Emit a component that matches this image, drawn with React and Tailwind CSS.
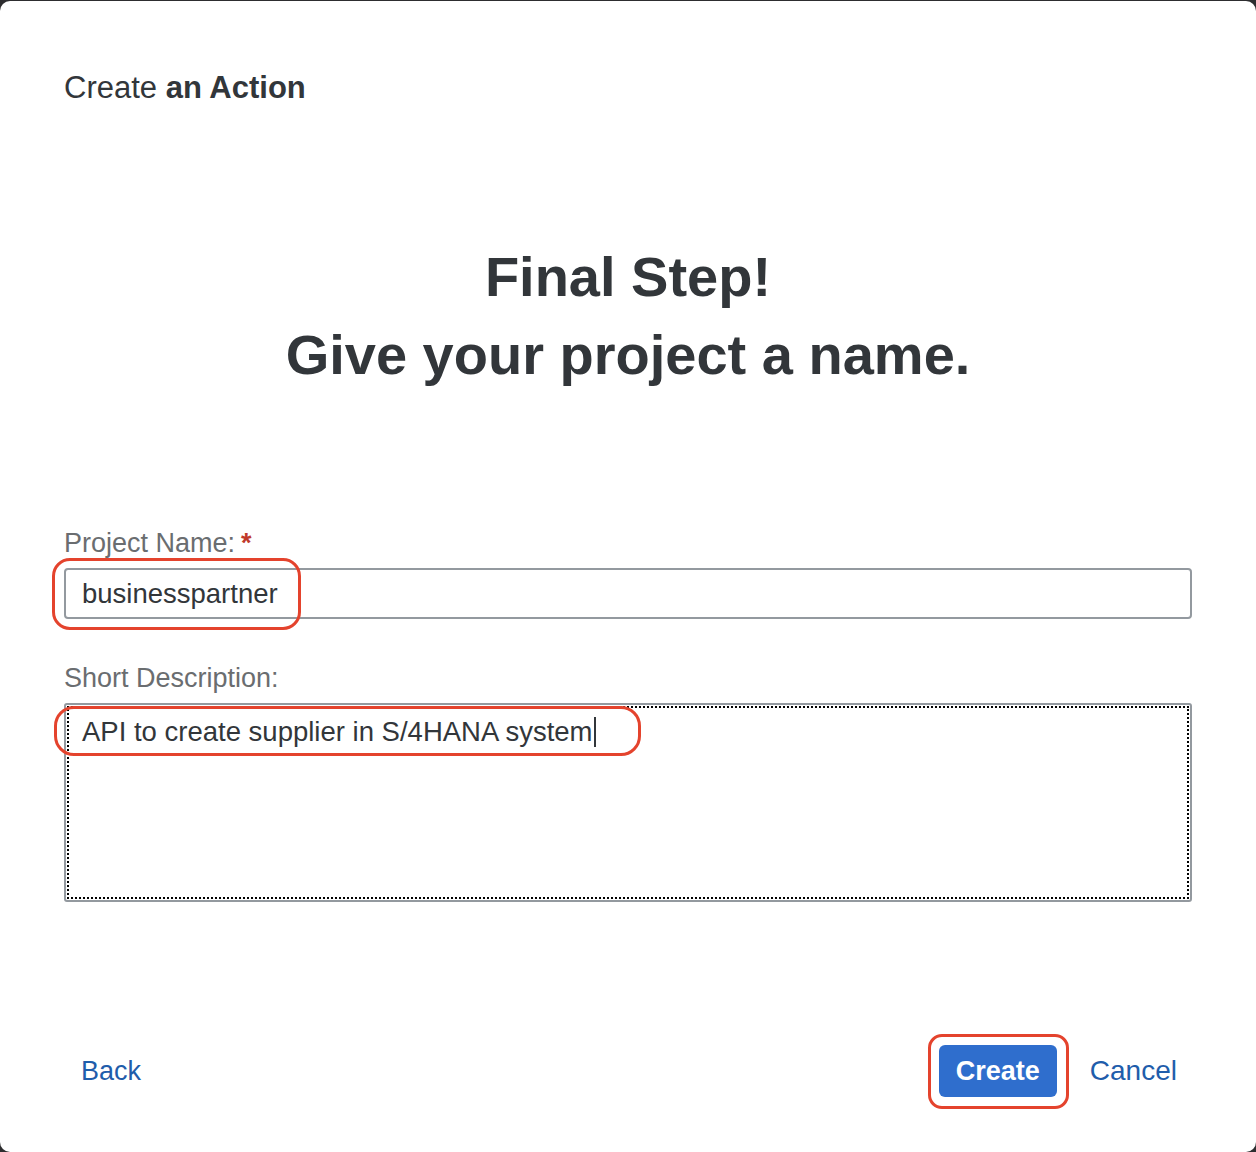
export default function App() {
  const font = { fontFamily: '"Liberation Sans", Arial, sans-serif' };
  return (
    <div className="min-h-screen bg-[#2d2d2f] pt-[1px]" style={font}>
      <div className="relative mx-auto flex h-[1151px] w-[1256px] flex-col rounded-[10px] bg-white px-[64px] text-[#32363a]">
        {/* header */}
        <div className="pt-[69px] text-[31px] leading-[36px]">
          Create <span className="font-bold">an Action</span>
        </div>

        {/* heading */}
        <h1 className="mt-[132px] text-center text-[56px] font-bold leading-[78px]">
          Final Step!
          <br />
          Give your project a name.
        </h1>

        {/* form */}
        <label className="mt-[133px] flex text-[27px] leading-[32px] text-[#6a6d70]">
          Project Name:
          <span className="ml-[6px] font-bold text-[#c0392b]">*</span>
        </label>
        <div className="mt-[9px] flex h-[51px] items-center rounded-[4px] border-2 border-[#93999f] pl-[16px] text-[27.5px] leading-[32px]">
          businesspartner
        </div>

        <label className="mt-[43px] text-[27px] leading-[32px] text-[#6a6d70]">Short Description:</label>
        <div className="mt-[9px] h-[199px] rounded-[3px] border-2 border-[#93999f] p-[1px]">
          <div className="h-full border-2 border-dotted border-black pl-[13px] pt-[3px] text-[27.5px] leading-[32px]">
            API to create supplier in S/4HANA system
            <span className="ml-[1px] inline-block h-[30px] w-[2px] translate-y-[6px] bg-[#32363a]" />
          </div>
        </div>

        {/* footer */}
        <div className="mt-[143px] flex h-[52px] items-center justify-between">
          <button className="pl-[17px] text-[27px] text-[#1f5dab]">Back</button>
          <div className="flex items-center gap-[33px] pr-[15px]">
            <button className="h-[52px] w-[118px] rounded-[6px] bg-[#2f6ecd] text-[27px] font-bold text-white">
              Create
            </button>
            <button className="text-[28px] text-[#1f5dab]">Cancel</button>
          </div>
        </div>

        {/* red annotation outlines */}
        <div className="pointer-events-none absolute left-[52px] top-[557px] h-[72px] w-[249px] rounded-[18px] border-[3px] border-[#e4432d]" />
        <div className="pointer-events-none absolute left-[54px] top-[705px] h-[50px] w-[587px] rounded-[20px] border-[3px] border-[#e4432d]" />
        <div className="pointer-events-none absolute left-[928px] top-[1033px] h-[75px] w-[141px] rounded-[14px] border-[3px] border-[#e4432d]" />
      </div>
    </div>
  );
}
